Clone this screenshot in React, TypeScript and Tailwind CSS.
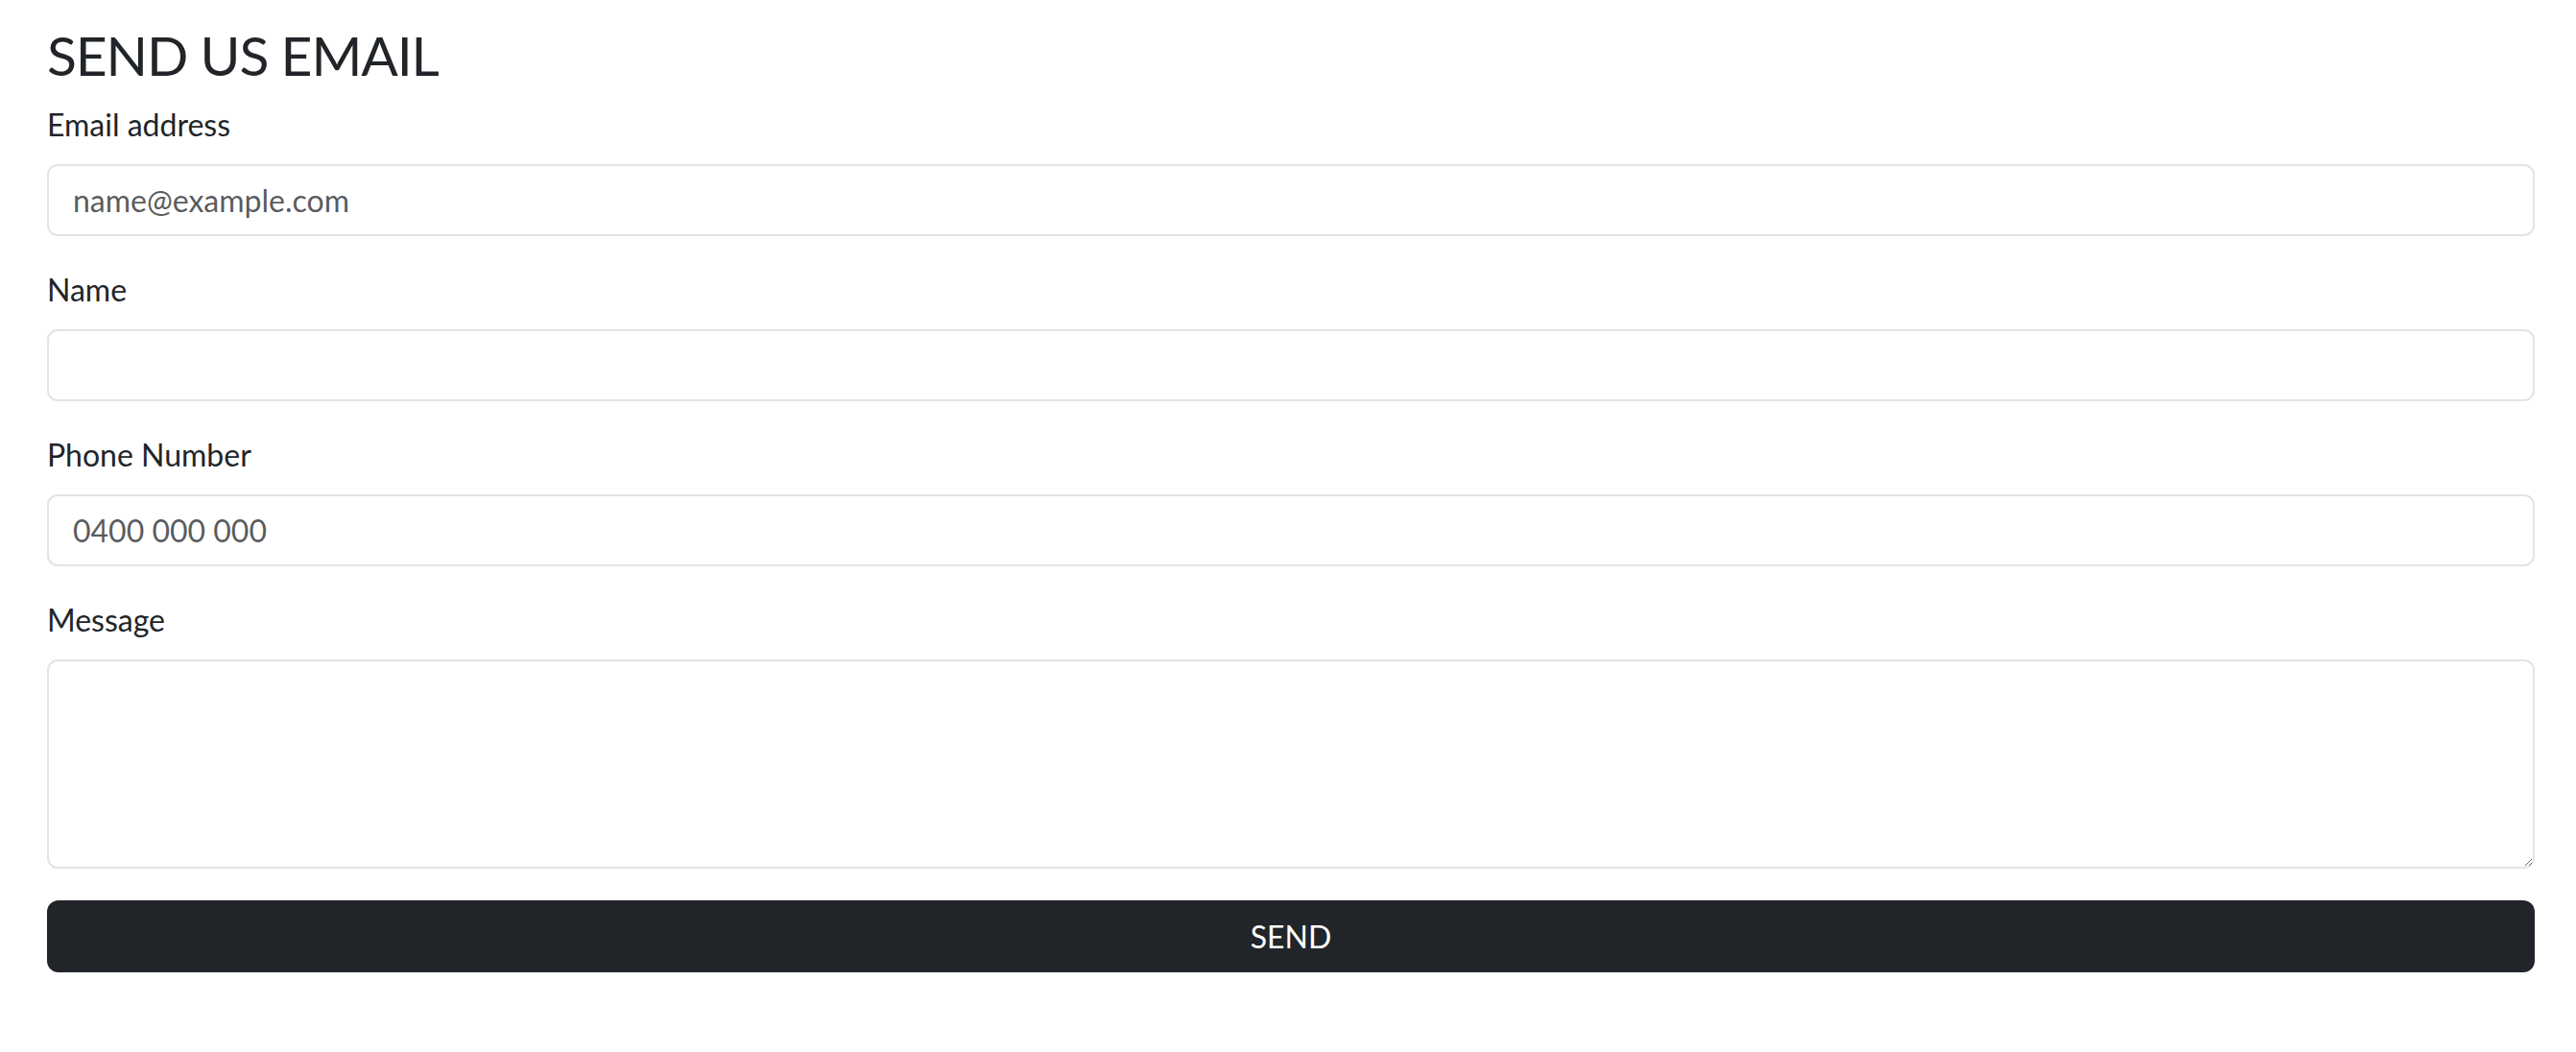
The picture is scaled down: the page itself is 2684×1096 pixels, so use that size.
import { useState } from "react";

interface fieldProps {
  id: string,
  label: string,
  type: string,
  placeholder?: string
}

const fields: fieldProps[] = [
  { id: "email", label: "Email address", type: "email", placeholder: "name@example.com" },
  { id: "name", label: "Name", type: "text" },
  { id: "phone", label: "Phone Number", type: "tel", placeholder: "0400 000 000" },
];

export default function App() {

  const [form, setForm] = useState<Record<string, string>>({});

  function handleChange(id: string, value: string){ setForm({ ...form, [id]: value }); }

  return (
    <div className="min-h-screen bg-white pl-[49px] pr-[43px] pt-[23px] text-[#212529] font-['Lato','Noto_Sans',sans-serif]">
      <h2 className="text-[57px] leading-[1.2] tracking-[-0.02em] font-normal mb-[15px]">SEND US EMAIL</h2>

      <form onSubmit={e => e.preventDefault()}>
        {fields.map(field => (
          <div key={field.id} className="mb-[32px]">
            <label htmlFor={field.id} className="block text-[32px] leading-[48px] mb-[17px]">{field.label}</label>
            <input
              id={field.id}
              type={field.type}
              placeholder={field.placeholder}
              value={form[field.id] ?? ""}
              onChange={e => handleChange(field.id, e.target.value)}
              className="block w-full h-[75px] px-[25px] text-[32px] leading-[48px] border-2 border-[#e1e4e8] rounded-[11px] bg-white outline-none placeholder:text-[rgba(33,37,41,0.75)]"
            />
          </div>
        ))}

        <div className="mb-[33px]">
          <label htmlFor="message" className="block text-[32px] leading-[48px] mb-[17px]">Message</label>
          <textarea
            id="message"
            value={form.message ?? ""}
            onChange={e => handleChange("message", e.target.value)}
            className="block w-full h-[218px] px-[25px] py-[13px] text-[32px] leading-[48px] border-2 border-[#e1e4e8] rounded-[11px] bg-white outline-none resize-y"
          />
        </div>

        <button type="submit" className="block w-full h-[75px] rounded-[12px] bg-[#212529] text-white text-[32px] leading-none">SEND</button>
      </form>
    </div>
  );
}
